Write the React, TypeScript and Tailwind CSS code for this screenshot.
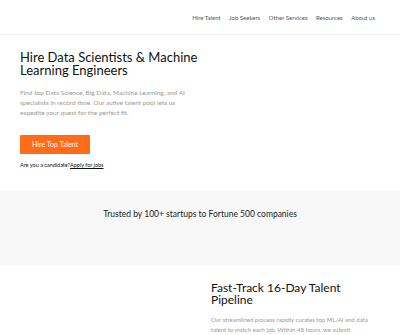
import React from "react";

const font = { fontFamily: "Lato, 'Noto Sans', sans-serif" };

export default function App() {
  return (
    <div className="w-[400px] bg-white text-[#222]" style={font}>
      <header className="h-[35px] border-b border-[#f0f0f0] flex items-center justify-end pr-[25px]">
        <nav className="flex gap-[8.5px] text-[6px] text-[#555]">
          <span>Hire Talent</span>
          <span>Job Seekers</span>
          <span>Other Services</span>
          <span>Resources</span>
          <span>About us</span>
        </nav>
      </header>
      <section className="px-[20px] pt-[16px] pb-[22px]">
        <h1 className="text-[13px] leading-[13px] text-[#111] w-[180px]">
          Hire Data Scientists &amp; Machine Learning Engineers
        </h1>
        <p className="mt-[11px] text-[6.5px] leading-[10px] text-[#999] w-[170px]">
          Find top Data Science, Big Data, Machine Learning, and AI specialists in record time. Our active talent pool lets us expedite your quest for the perfect fit.
        </p>
        <button className="mt-[17px] w-[70px] h-[19px] bg-[#ff6c17] text-white text-[7px] flex items-center justify-center rounded-[1px]">
          Hire Top Talent
        </button>
        <p className="mt-[7px] text-[5.5px] text-[#111]">
          Are you a candidate?<span className="underline">Apply for jobs</span>
        </p>
      </section>
      <section className="h-[74px] bg-[#f8f8f8] flex justify-center pt-[17px]">
        <p className="text-[8.5px] text-[#222]">Trusted by 100+ startups to Fortune 500 companies</p>
      </section>
      <section className="flex pt-[17px]">
        <div className="w-[211px]" />
        <div className="w-[170px]">
          <h2 className="text-[12px] leading-[12px] text-[#111]">Fast-Track 16-Day Talent Pipeline</h2>
          <p className="mt-[9px] text-[6px] leading-[10px] text-[#999]">
            Our streamlined process rapidly curates top ML/AI and data talent to match each job. Within 48 hours, we submit
          </p>
        </div>
      </section>
    </div>
  );
}
